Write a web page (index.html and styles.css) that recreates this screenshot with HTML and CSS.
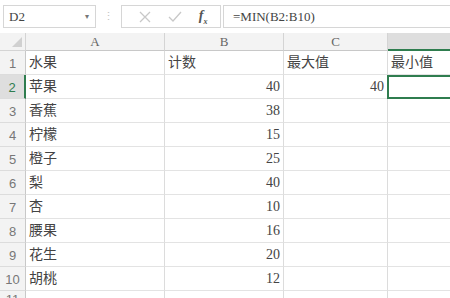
FILE: index.html
```html
<!DOCTYPE html>
<html lang="zh">
<head>
    <meta charset="UTF-8">
    <title>Sheet</title>
    <link rel="stylesheet" href="styles.css">
</head>
<body>
    <div class="toolbar">
        <div class="namebox">
            <span>D2</span>
            <span class="caret">&#9662;</span>
        </div>
        <div class="grip">&#8942;</div>
        <div class="fnbox">
            <svg width="12" height="12" viewBox="0 0 12 12"><path d="M1 1L11 11M11 1L1 11" stroke="#c8c8c8" stroke-width="1.3" fill="none"/></svg>
            <svg width="14" height="12" viewBox="0 0 14 12"><path d="M1 6L5 10L13 1" stroke="#c8c8c8" stroke-width="1.3" fill="none"/></svg>
            <span class="fx">f<sub>x</sub></span>
        </div>
        <div class="formula">=MIN(B2:B10)</div>
    </div>

    <div class="sheet">
        <div class="corner"><span class="tri"></span></div>
        <div class="colhead">A</div>
        <div class="colhead">B</div>
        <div class="colhead">C</div>
        <div class="colhead sel"></div>

        <div class="rowhead">1</div>
        <div class="cell">水果</div>
        <div class="cell">计数</div>
        <div class="cell">最大值</div>
        <div class="cell">最小值</div>

        <div class="rowhead sel">2</div>
        <div class="cell">苹果</div>
        <div class="cell num">40</div>
        <div class="cell num">40</div>
        <div class="cell active"></div>

        <div class="rowhead">3</div>
        <div class="cell">香蕉</div>
        <div class="cell num">38</div>
        <div class="cell"></div>
        <div class="cell"></div>

        <div class="rowhead">4</div>
        <div class="cell">柠檬</div>
        <div class="cell num">15</div>
        <div class="cell"></div>
        <div class="cell"></div>

        <div class="rowhead">5</div>
        <div class="cell">橙子</div>
        <div class="cell num">25</div>
        <div class="cell"></div>
        <div class="cell"></div>

        <div class="rowhead">6</div>
        <div class="cell">梨</div>
        <div class="cell num">40</div>
        <div class="cell"></div>
        <div class="cell"></div>

        <div class="rowhead">7</div>
        <div class="cell">杏</div>
        <div class="cell num">10</div>
        <div class="cell"></div>
        <div class="cell"></div>

        <div class="rowhead">8</div>
        <div class="cell">腰果</div>
        <div class="cell num">16</div>
        <div class="cell"></div>
        <div class="cell"></div>

        <div class="rowhead">9</div>
        <div class="cell">花生</div>
        <div class="cell num">20</div>
        <div class="cell"></div>
        <div class="cell"></div>

        <div class="rowhead">10</div>
        <div class="cell">胡桃</div>
        <div class="cell num">12</div>
        <div class="cell"></div>
        <div class="cell"></div>

        <div class="rowhead last">11</div>
        <div class="cell"></div>
        <div class="cell"></div>
        <div class="cell"></div>
        <div class="cell"></div>
    </div>
</body>
</html>
```

FILE: styles.css
```css
body {
    margin: 0;
    width: 450px;
    height: 298px;
    overflow: hidden;
    background: #fff;
    font-family: "Liberation Serif", "Noto Sans CJK SC", serif;
    color: #333;
}

.toolbar {
    display: flex;
    align-items: center;
    height: 33px;
    padding-left: 3px;
    box-sizing: border-box;
}

.namebox {
    width: 93px;
    height: 23px;
    box-sizing: border-box;
    border: 1px solid #d6d6d6;
    display: flex;
    align-items: center;
    justify-content: space-between;
    padding: 0 6px 0 5px;
    font-size: 13px;
    color: #444;
}

.caret {
    font-size: 8px;
    color: #777;
}

.grip {
    width: 25px;
    text-align: center;
    color: #c4c4c4;
    font-size: 11px;
}

.fnbox {
    width: 100px;
    height: 23px;
    box-sizing: border-box;
    border: 1px solid #d6d6d6;
    display: flex;
    align-items: center;
    justify-content: space-around;
    padding: 0 4px 0 8px;
}

.fx {
    font-style: italic;
    font-size: 14px;
    color: #555;
    font-weight: bold;
}

.fx sub {
    font-size: 8px;
}

.formula {
    flex: 1;
    height: 23px;
    box-sizing: border-box;
    margin-left: 2px;
    border: 1px solid #d6d6d6;
    border-right: 0;
    padding-left: 9px;
    display: flex;
    align-items: center;
    font-size: 13px;
    color: #444;
}

.sheet {
    display: grid;
    grid-template-columns: 26px 139px 119px 104px 80px;
    grid-template-rows: 18px repeat(11, 24px);
}

.corner,
.colhead,
.rowhead {
    background: #f3f3f3;
    color: #666;
    box-sizing: border-box;
}

.corner {
    border-right: 1px solid #d4d4d4;
    border-bottom: 1px solid #d4d4d4;
    position: relative;
}

.tri {
    position: absolute;
    right: 3px;
    bottom: 3px;
    width: 0;
    height: 0;
    border-left: 10px solid transparent;
    border-bottom: 10px solid #d0d0d0;
}

.colhead {
    border-right: 1px solid #d4d4d4;
    border-bottom: 1px solid #c8c8c8;
    text-align: center;
    font-size: 13px;
    line-height: 17px;
}

.colhead.sel {
    background: #dedede;
    border-bottom: 2px solid #2f7d4f;
}

.rowhead {
    border-right: 1px solid #c8c8c8;
    border-bottom: 1px solid #dcdcdc;
    font-family: "Liberation Sans", sans-serif;
    font-size: 13px;
    text-align: center;
    line-height: 26px;
    color: #777;
}

.rowhead.last {
    line-height: 18px;
}

.rowhead.sel {
    background: #dedede;
    border-right: 2px solid #2f7d4f;
    color: #2f7d4f;
}

.cell {
    box-sizing: border-box;
    border-right: 1px solid #dcdcdc;
    border-bottom: 1px solid #e3e3e3;
    font-size: 14px;
    line-height: 23px;
    padding: 0 3px;
    color: #444;
    white-space: nowrap;
}

.num {
    text-align: right;
}

.active {
    border: 2px solid #2f7d4f;
    margin-left: -1px;
}
```
